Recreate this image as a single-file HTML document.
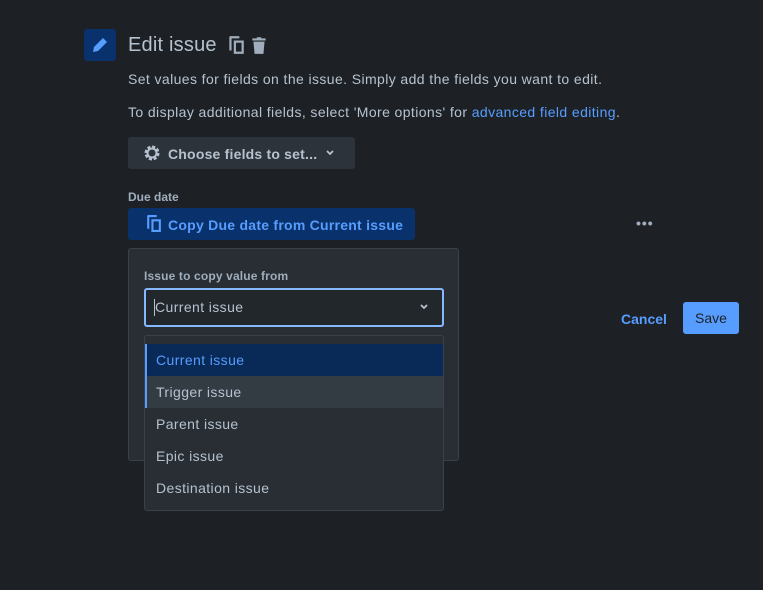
<!DOCTYPE html>
<html><head><style>
body{margin:0;width:763px;height:590px;background:#1d2125;font-family:"Liberation Sans",sans-serif;position:relative;overflow:hidden;color:#b6c2cf}
.a{position:absolute}
.r{letter-spacing:0.4px}
</style></head><body>
<div class="a" style="left:84px;top:29px;width:32px;height:32px;background:#09326c;border-radius:3px">
<svg width="32" height="32" viewBox="0 0 32 32"><path d="M9 23l1-5 9-9 4 4-9 9z" fill="#579dff"/></svg></div>
<div class="a" style="left:128px;top:34px;font-size:20px;color:#b6c2cf;letter-spacing:0.2px">Edit issue</div>
<svg class="a" style="left:226px;top:35px" width="20" height="20" viewBox="0 0 18 18"><path d="M4 1h8v2H5v11H3V2a1 1 0 011-1z M7 5h9v12H7z M9 7v8h5V7z" fill="#9fadbc" fill-rule="evenodd"/></svg>
<svg class="a" style="left:249px;top:35px" width="20" height="20" viewBox="0 0 18 18"><path d="M3 3h12v2H3z M7 2h4v1H7z M4 6h10l-1 11H5z" fill="#9fadbc"/></svg>
<div class="a r" style="left:128px;top:71px;font-size:14px">Set values for fields on the issue. Simply add the fields you want to edit.</div>
<div class="a r" style="left:128px;top:104px;font-size:14px">To display additional fields, select 'More options' for <span style="color:#579dff">advanced field editing</span>.</div>
<div class="a" style="left:128px;top:137px;width:227px;height:32px;background:#2c333a;border-radius:3px"></div>
<svg class="a" style="left:142px;top:143px" width="20" height="20" viewBox="0 0 20 20"><circle cx="10" cy="10" r="6" fill="none" stroke="#b6c2cf" stroke-width="3" stroke-dasharray="3 1.7"/><circle cx="10" cy="10" r="4.5" fill="none" stroke="#b6c2cf" stroke-width="2"/></svg>
<div class="a" style="left:168px;top:146px;font-size:14px;font-weight:bold;color:#b6c2cf;letter-spacing:0.2px">Choose fields to set...</div>
<svg class="a" style="left:325px;top:148px" width="10" height="10" viewBox="0 0 10 10"><path d="M2 3l3 3 3-3" stroke="#b6c2cf" stroke-width="1.8" fill="none"/></svg>
<div class="a" style="left:128px;top:190px;font-size:12px;font-weight:bold;color:#9fadbc">Due date</div>
<div class="a" style="left:128px;top:208px;width:287px;height:32px;background:#09326c;border-radius:3px"></div>
<svg class="a" style="left:144px;top:214px" width="19" height="19" viewBox="0 0 18 18"><path d="M4 1h8v2H5v11H3V2a1 1 0 011-1z M7 5h9v12H7z M9 7v8h5V7z" fill="#579dff" fill-rule="evenodd"/></svg>
<div class="a" style="left:168px;top:217px;font-size:14px;font-weight:bold;color:#579dff;letter-spacing:0.25px">Copy Due date from Current issue</div>
<div class="a" style="left:636px;top:215px;font-size:14px;letter-spacing:1px;color:#9fadbc;font-weight:bold">•••</div>
<div class="a" style="left:128px;top:248px;width:331px;height:213px;background:#282e33;border:1px solid #3a4148;border-radius:3px;box-sizing:border-box"></div>
<div class="a" style="left:144px;top:269px;font-size:12px;font-weight:bold;color:#9fadbc;letter-spacing:0.15px">Issue to copy value from</div>
<div class="a" style="left:144px;top:288px;width:300px;height:39px;background:#22272b;border:2px solid #85b8ff;border-radius:3px;box-sizing:border-box"></div>
<div class="a r" style="left:154px;top:299px;font-size:14px;color:#b6c2cf;border-left:1px solid #b6c2cf;padding-left:0px;line-height:17px">Current issue</div>
<svg class="a" style="left:419px;top:302px" width="10" height="10" viewBox="0 0 10 10"><path d="M2 3l3 3 3-3" stroke="#b6c2cf" stroke-width="1.8" fill="none"/></svg>
<div class="a r" style="left:144px;top:335px;width:300px;height:176px;background:#282e33;border:1px solid #3a4148;border-radius:3px;box-sizing:border-box;overflow:hidden">
<div style="height:8px"></div>
<div style="height:32px;background:#092957;border-left:2px solid #579dff;color:#579dff;font-size:14px;line-height:32px;padding-left:9px">Current issue</div>
<div style="height:32px;background:#333b43;border-left:2px solid #579dff;font-size:14px;line-height:32px;padding-left:9px">Trigger issue</div>
<div style="height:32px;font-size:14px;line-height:32px;padding-left:11px">Parent issue</div>
<div style="height:32px;font-size:14px;line-height:32px;padding-left:11px">Epic issue</div>
<div style="height:32px;font-size:14px;line-height:32px;padding-left:11px">Destination issue</div>
</div>
<div class="a" style="left:621px;top:311px;font-size:14px;font-weight:bold;color:#579dff">Cancel</div>
<div class="a" style="left:683px;top:302px;width:56px;height:32px;background:#579dff;border-radius:3px;color:#1d2125;font-size:14px;line-height:32px;text-align:center">Save</div>
</body></html>
